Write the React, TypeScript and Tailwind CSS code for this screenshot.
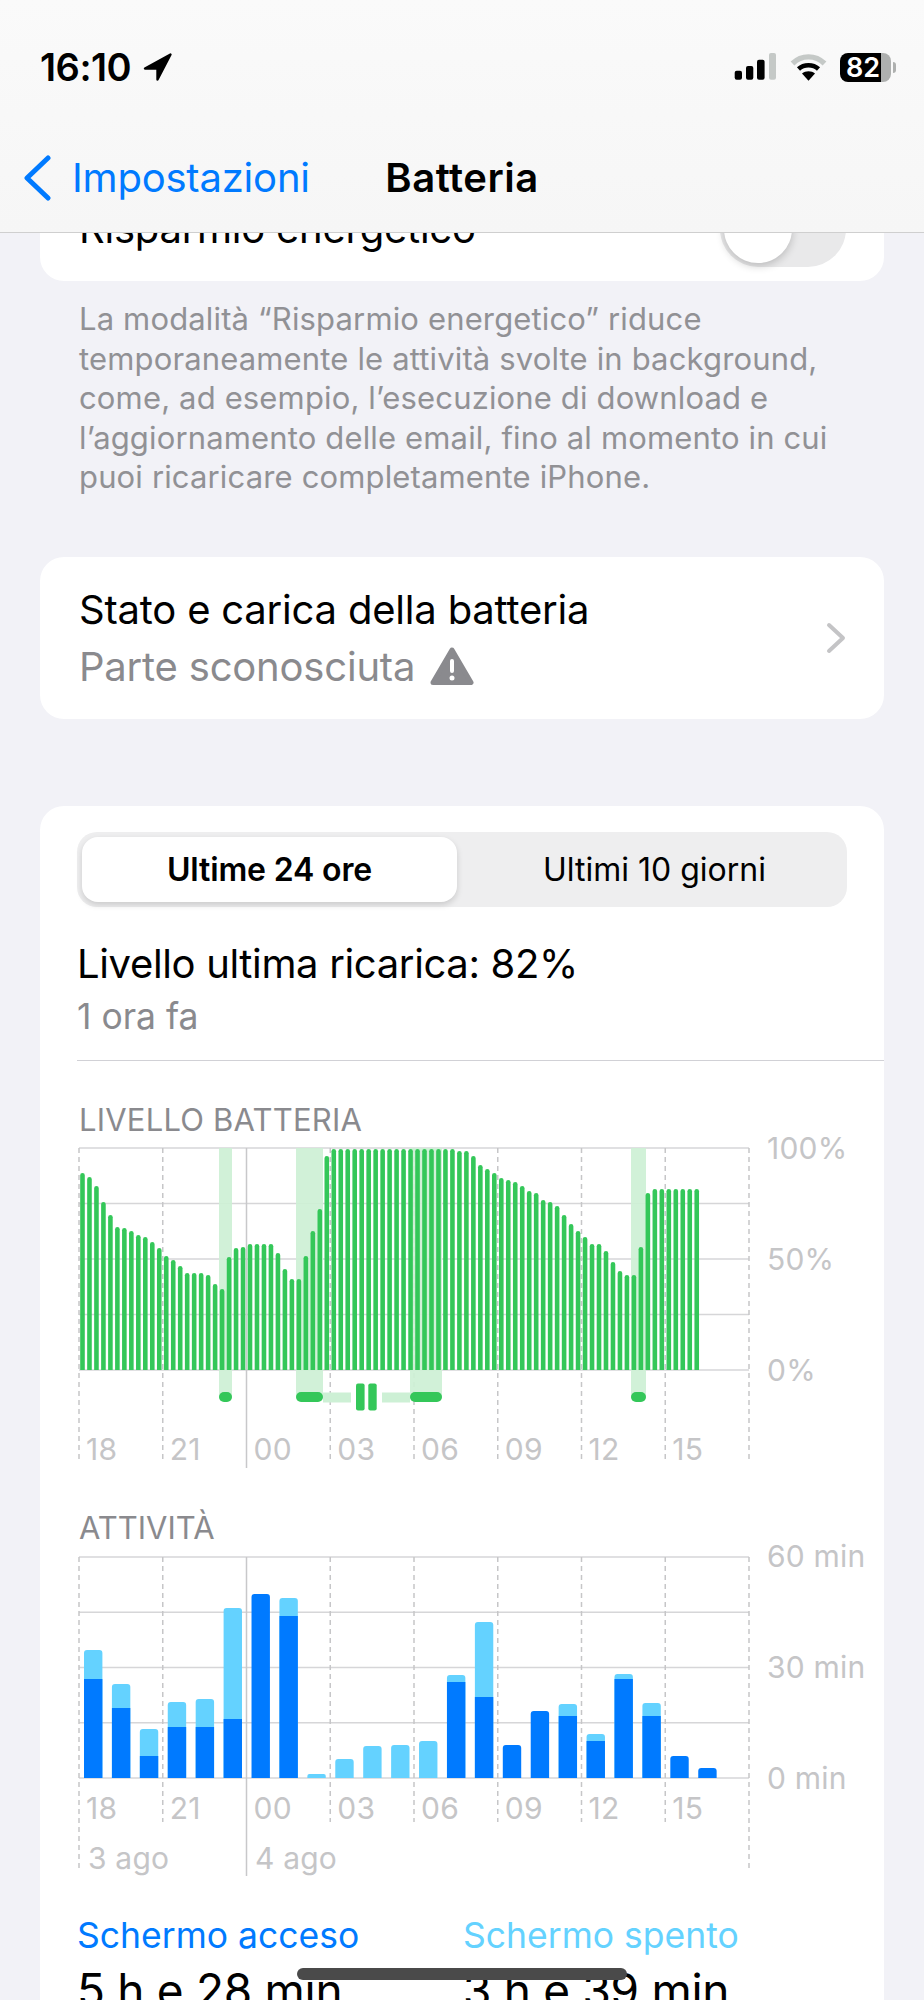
import React from 'react';

const FONT = '[font-family:Inter,"Liberation_Sans",sans-serif]';

const GREEN = '#34c759';
const BAND = '#cdf0d5';
const BLUE = '#007aff';
const CYAN = '#64d2ff';
const STEP = 83.75;

// tops of the battery bars, read off the chart (y in chart coords)
const batteryTops = [
  35, 39, 48, 64, 77, 89, 90, 93, 97, 99, 104, 110, 118, 122, 128, 135, 135, 135, 137, 146, 151, 119, 110, 109, 106,
  106, 106, 106, 115, 131, 141, 141, 118, 93, 71, 18, 11, 11, 11, 11, 11, 11, 11, 11, 11, 11, 11, 11, 11, 11, 11, 11,
  11, 11, 13, 13, 18, 27, 31, 35, 40, 42, 44, 48, 53, 55, 62, 64, 68, 77, 86, 93, 99, 106, 106, 113, 124, 133, 137,
  137, 109, 55, 51, 51, 51, 51, 51, 51, 51,
];

// [top of whole bar, top of dark part]; null means that colour is the only one
const activityBars: [number, number | null][] = [
  [104, 133], [138, 162], [183, 210], [156, 181], [153, 181], [62, 173], [48, 48], [52, 70], [228, null], [213, null],
  [200, null], [199, null], [195, null], [129, 136], [76, 151], [199, 199], [165, 165], [158, 170], [188, 195],
  [128, 133], [157, 170], [210, 210], [222, 222],
];

const bandRanges = [[179, 192], [256, 283], [370, 402], [591, 606]];
const hours = ['18', '21', '00', '03', '06', '09', '12', '15'];

const topRounded = (x: number, w: number, top: number, r: number, bottom = 232) =>
  `M${x} ${bottom}V${top + r}A${r} ${r} 0 0 1 ${x + r} ${top}H${x + w - r}A${r} ${r} 0 0 1 ${x + w} ${top + r}V${bottom}Z`;

const Grid: React.FC<{ innerEnd: number; top: number }> = ({ innerEnd, top }) => (
  <g>
    {[0, 1, 2, 3, 4].map(i => {
      const y = top + ((232 - top) / 4) * i;
      return <line key={i} x1={39} x2={709} y1={y} y2={y} stroke="#d6d6d8" strokeWidth={1.5} />;
    })}
    {Array.from({ length: 9 }).map((_, i) => {
      const x = 39 + STEP * i;
      if (i === 2) return <line key={i} x1={x} x2={x} y1={top} y2={330} stroke="#c8c8ca" strokeWidth={1.5} />;
      const outer = i === 0 || i === 8;
      return (
        <line key={i} x1={x} x2={x} y1={top} y2={outer ? 325 : innerEnd} stroke="#c6c6c8" strokeWidth={1.5} strokeDasharray="5 4" />
      );
    })}
  </g>
);

const AxisText: React.FC<{ x: number; y: number; children: React.ReactNode }> = ({ x, y, children }) => (
  <text x={x} y={y} fill="#c5c5c7" fontSize={30} letterSpacing={0.2} fontFamily="Inter, sans-serif">
    {children}
  </text>
);

const BatteryChart: React.FC = () => (
  <svg width={844} height={372} className="block overflow-visible">
    <Grid innerEnd={325} top={10} />
    {bandRanges.map(([a, b]) => (
      <rect key={a} x={a} y={10} width={b - a} height={250} fill={BAND} opacity={0.92} />
    ))}
    {batteryTops.map((top, i) => (
      <path key={i} d={topRounded(39 + 6.98 * (i + 0.5) - 2.3, 4.6, top, 2.3)} fill={GREEN} />
    ))}
    <rect x={283} y={254.5} width={28} height={10} fill={BAND} />
    <rect x={342} y={254.5} width={28} height={10} fill={BAND} />
    {bandRanges.map(([a, b]) => (
      <rect key={a} x={a} y={254} width={b - a} height={10} rx={5} fill={GREEN} />
    ))}
    <rect x={316} y={245.5} width={8.6} height={27} rx={2} fill={GREEN} />
    <rect x={328.3} y={245.5} width={8.4} height={27} rx={2} fill={GREEN} />
    {hours.map((h, i) => (
      <AxisText key={h} x={46 + STEP * i} y={322}>{h}</AxisText>
    ))}
    <AxisText x={727} y={21}>100%</AxisText>
    <AxisText x={727} y={132}>50%</AxisText>
    <AxisText x={727} y={243}>0%</AxisText>
  </svg>
);

const ActivityChart: React.FC = () => (
  <svg width={844} height={334} className="block overflow-visible">
    <Grid innerEnd={276} top={11} />
    {activityBars.map(([top, dark], i) => {
      const x = 44 + 27.92 * i;
      const isDark = dark === top;
      return (
        <g key={i}>
          <path d={topRounded(x, 18.4, top, top > 222 ? 2 : 3)} fill={isDark ? BLUE : CYAN} />
          {dark !== null && !isDark && <rect x={x} y={dark} width={18.4} height={232 - dark} fill={BLUE} />}
        </g>
      );
    })}
    {hours.map((h, i) => (
      <AxisText key={h} x={46 + STEP * i} y={273}>{h}</AxisText>
    ))}
    <AxisText x={48} y={323}>3 ago</AxisText>
    <AxisText x={215} y={323}>4 ago</AxisText>
    <AxisText x={727} y={21}>60 min</AxisText>
    <AxisText x={727} y={132}>30 min</AxisText>
    <AxisText x={727} y={243}>0 min</AxisText>
  </svg>
);

const StatusIcons: React.FC = () => (
  <div className="flex items-center">
    <svg width={42} height={28} viewBox="0 0 42 28" className="block">
      <rect x={0.7} y={17.7} width={7.3} height={9} rx={2} fill="#000" />
      <rect x={12} y={13} width={7.3} height={13.7} rx={2} fill="#000" />
      <rect x={23} y={6.7} width={7.6} height={20} rx={2} fill="#000" />
      <rect x={35} y={0} width={7} height={26.7} rx={2} fill="#c5c9c7" />
    </svg>
    <svg width={37} height={28} viewBox="0 0 37 28" className="ml-[14px] block">
      <path d="M2.5 10.5C11.5 1.6 25.5 1.6 34.5 10.5" fill="none" stroke="#c5c9c7" strokeWidth={5.4} />
      <path d="M8.5 16C14 11 23 11 28.5 16" fill="none" stroke="#000" strokeWidth={4.6} />
      <path d="M12 20.5C15.5 17.4 21.5 17.4 25 20.5L18.5 27.7Z" fill="#000" />
    </svg>
    <div className="ml-[13px] flex items-center">
      <div className="flex h-[29px] w-[41px] items-center justify-end rounded-l-[8px] bg-black pr-[1px] text-[27px] leading-[29px] font-semibold text-white">
        82
      </div>
      <div className="h-[29px] w-[10px] rounded-r-[8px] bg-[#aeb0af]" />
      <div className="ml-[2px] h-[11px] w-[3px] rounded-r-full bg-[#aeb0af]" />
    </div>
  </div>
);

const Header: React.FC = () => (
  <header className="h-[233px] border-b border-[#cfcfcf] bg-gradient-to-b from-[#fafafa] to-[#f6f6f6]">
    <div className="flex h-[134px] items-center justify-between pl-[40px] pr-[28px]">
      <div className="flex items-center">
        <span className="text-[38px] leading-[46px] font-semibold tracking-[-0.5px] text-black">16:10</span>
        <svg width={30} height={28} viewBox="0 0 30 28" className="ml-[12px] block">
          <path d="M27.5 1.5L2 15.5H14.5V26.5Z" fill="#000" stroke="#000" strokeWidth={2.4} strokeLinejoin="round" />
        </svg>
      </div>
      <StatusIcons />
    </div>
    <div className="grid h-[88px] grid-cols-[1fr_auto_1fr] items-center">
      <div className="flex items-center pl-[23px]">
        <svg width={28} height={46} viewBox="0 0 28 46" className="block">
          <path d="M25 3L4 23L25 43" fill="none" stroke={BLUE} strokeWidth={5} strokeLinecap="round" strokeLinejoin="round" />
        </svg>
        <span className="ml-[21px] text-[40px] leading-[50px] tracking-[-0.2px] text-[#007aff]">Impostazioni</span>
      </div>
      <span className="text-[40px] leading-[50px] font-semibold tracking-[0.5px] text-black">Batteria</span>
      <div />
    </div>
  </header>
);

const App: React.FC = () => (
  <div className={`relative h-[2000px] w-[924px] overflow-hidden bg-[#f2f2f7] text-black ${FONT}`}>
    <Header />

    <main className="px-[40px]">
      {/* clipped by the nav bar, list is scrolled */}
      <section className="h-[48px] overflow-hidden rounded-b-[24px] bg-white pl-[39px] pr-[38px]">
        <div className="-mt-[42px] flex h-[76px] items-center justify-between">
          <span className="text-[40px] leading-[50px] tracking-[-0.25px]">Risparmio energetico</span>
          <div className="flex h-[76px] w-[126px] items-center rounded-full bg-[#e9e9ea] p-[4px]">
            <div className="h-[68px] w-[68px] rounded-full bg-white shadow-[0_3px_8px_rgba(0,0,0,0.2)]" />
          </div>
        </div>
      </section>

      <p className="mt-[18px] pl-[39px] pr-[30px] text-[31px] leading-[39.5px] tracking-[0.15px] text-[#919195]">
        La modalità “Risparmio energetico” riduce temporaneamente le attività svolte in background, come, ad esempio, l’esecuzione di download e l’aggiornamento delle email, fino al momento in cui puoi ricaricare completamente iPhone.
      </p>

      <section className="mt-[60px] flex h-[162px] items-center justify-between rounded-[24px] bg-white pl-[39px] pr-[38px]">
        <div className="pt-[2px]">
          <div className="text-[40px] leading-[50px] tracking-[-0.2px]">Stato e carica della batteria</div>
          <div className="mt-[7px] flex items-center text-[40px] leading-[50px] tracking-[-0.2px] text-[#8a8a8e]">
            Parte sconosciuta
            <svg width={44} height={40} viewBox="0 0 44 40" className="ml-[15px] block">
              <path d="M22 3L41 35.5H3Z" fill="#8a8a8e" stroke="#8a8a8e" strokeWidth={5} strokeLinejoin="round" />
              <rect x={20} y={12} width={4} height={14} rx={2} fill="#fff" />
              <circle cx={22} cy={31} r={2.5} fill="#fff" />
            </svg>
          </div>
        </div>
        <svg width={20} height={32} viewBox="0 0 20 32" className="block">
          <path d="M3 3L17 16L3 29" fill="none" stroke="#c4c4c6" strokeWidth={4} strokeLinecap="round" strokeLinejoin="round" />
        </svg>
      </section>

      <section className="mt-[87px] rounded-t-[24px] bg-white pt-[26px]">
        <div className="ml-[37px] mr-[37px] flex h-[75px] rounded-[20px] bg-[#eeeeef] p-[5px]">
          <div className="flex w-[375px] items-center justify-center rounded-[16px] bg-white pt-[2px] text-[32px] leading-[40px] font-semibold tracking-[-0.15px] shadow-[0_3px_6px_rgba(0,0,0,0.15)]">
            Ultime 24 ore
          </div>
          <div className="flex flex-1 items-center justify-center pl-[10px] pt-[2px] text-[32px] leading-[40px]">Ultimi 10 giorni</div>
        </div>

        <div className="ml-[37px] mt-[33px] text-[40px] leading-[48px] tracking-[-0.35px]">Livello ultima ricarica: 82%</div>
        <div className="ml-[37px] mt-[9px] text-[35.5px] leading-[40px] text-[#8a8a8e]">1 ora fa</div>
        <div className="ml-[37px] mt-[23px] h-[1px] bg-[#d1d1d6]" />

        <div className="ml-[39px] mt-[41px] text-[31px] leading-[36px] tracking-[0.2px] text-[#8a8a8e]">LIVELLO BATTERIA</div>
        <BatteryChart />
        <div className="ml-[39px] text-[31px] leading-[36px] text-[#8a8a8e]">ATTIVITÀ</div>
        <ActivityChart />

        <div className="ml-[37px] mt-[34px] grid grid-cols-[386px_1fr]">
          <div>
            <div className="text-[35.5px] leading-[44px] text-[#007aff]">Schermo acceso</div>
            <div className="mt-[2px] text-[46px] leading-[60px] tracking-[-0.3px]">5 h e 28 min</div>
          </div>
          <div>
            <div className="text-[35.5px] leading-[44px] text-[#64d2ff]">Schermo spento</div>
            <div className="mt-[2px] text-[46px] leading-[60px] tracking-[-0.3px]">3 h e 39 min</div>
          </div>
        </div>
      </section>
    </main>

    {/* home indicator */}
    <div className="absolute bottom-[20px] left-[297px] h-[12px] w-[330px] rounded-full bg-[#4a4a4a]" />
  </div>
);

export default App;
